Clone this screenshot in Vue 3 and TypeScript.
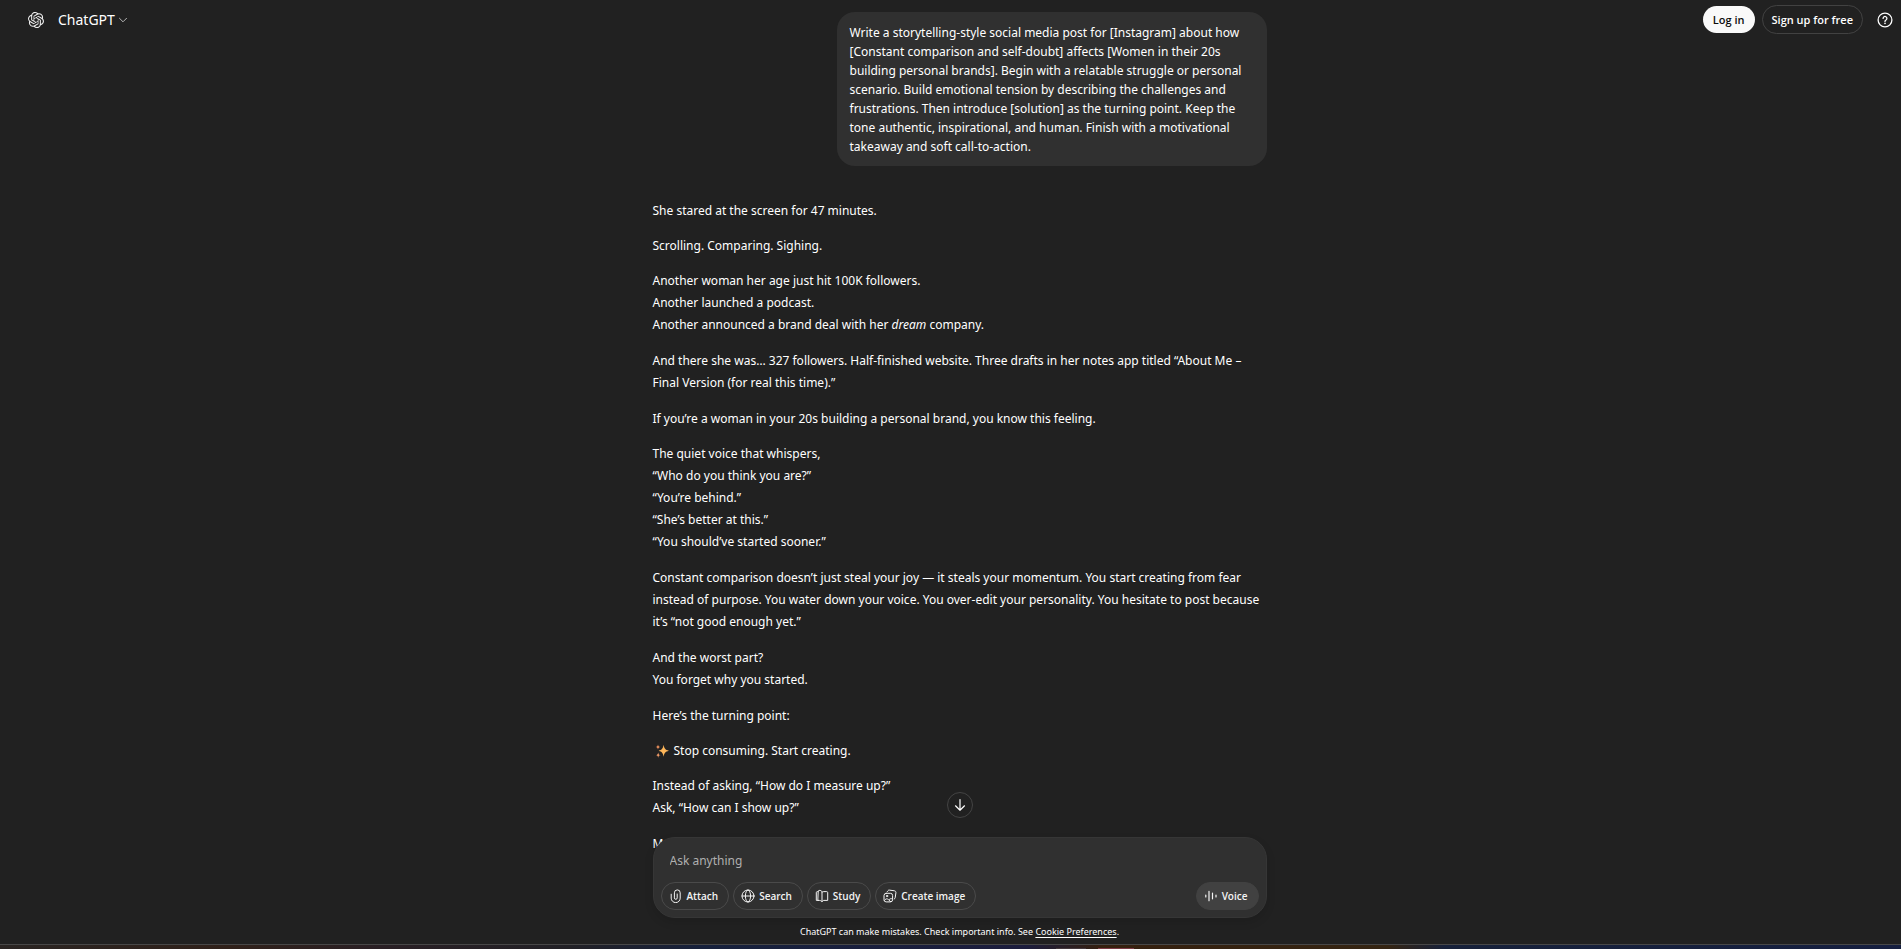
<script setup lang="ts">
import { ref } from 'vue'

interface Tool {
  label: string
  icon: 'attach' | 'search' | 'study' | 'image'
}

const draft = ref<string>('')

const prompt: string[] = [
  'Write a storytelling-style social media post for [Instagram] about how',
  '[Constant comparison and self-doubt] affects [Women in their 20s',
  'building personal brands]. Begin with a relatable struggle or personal',
  'scenario. Build emotional tension by describing the challenges and',
  'frustrations. Then introduce [solution] as the turning point. Keep the',
  'tone authentic, inspirational, and human. Finish with a motivational',
  'takeaway and soft call-to-action.',
]

const tools: Tool[] = [
  { label: 'Attach', icon: 'attach' },
  { label: 'Search', icon: 'search' },
  { label: 'Study', icon: 'study' },
  { label: 'Create image', icon: 'image' },
]
</script>

<template>
  <div class="app">
    <header class="topbar">
      <a class="home" href="#" aria-label="Home">
        <svg viewBox="0 0 24 24" width="16" height="16" fill="currentColor">
          <path d="M22.2819 9.8211a5.9847 5.9847 0 0 0-.5157-4.9108 6.0462 6.0462 0 0 0-6.5098-2.9A6.0651 6.0651 0 0 0 4.9807 4.1818a5.9847 5.9847 0 0 0-3.9977 2.9 6.0462 6.0462 0 0 0 .7427 7.0966 5.98 5.98 0 0 0 .511 4.9107 6.051 6.051 0 0 0 6.5146 2.9001A5.9847 5.9847 0 0 0 13.2599 24a6.0557 6.0557 0 0 0 5.7718-4.2058 5.9894 5.9894 0 0 0 3.9977-2.9001 6.0557 6.0557 0 0 0-.7475-7.0729zm-9.022 12.6081a4.4755 4.4755 0 0 1-2.8764-1.0408l.1419-.0804 4.7783-2.7582a.7948.7948 0 0 0 .3927-.6813v-6.7369l2.02 1.1686a.071.071 0 0 1 .038.052v5.5826a4.504 4.504 0 0 1-4.4945 4.4944zm-9.6607-4.1254a4.4708 4.4708 0 0 1-.5346-3.0137l.142.0852 4.783 2.7582a.7712.7712 0 0 0 .7806 0l5.8428-3.3685v2.3324a.0804.0804 0 0 1-.0332.0615L9.74 19.9502a4.4992 4.4992 0 0 1-6.1408-1.6464zM2.3408 7.8956a4.485 4.485 0 0 1 2.3655-1.9728V11.6a.7664.7664 0 0 0 .3879.6765l5.8144 3.3543-2.0201 1.1685a.0757.0757 0 0 1-.071 0l-4.8303-2.7865A4.504 4.504 0 0 1 2.3408 7.872zm16.5963 3.8558L13.1038 8.364 15.1192 7.2a.0757.0757 0 0 1 .071 0l4.8303 2.7913a4.4944 4.4944 0 0 1-.6765 8.1042v-5.6772a.79.79 0 0 0-.407-.667zm2.0107-3.0231l-.142-.0852-4.7735-2.7818a.7759.7759 0 0 0-.7854 0L9.409 9.2297V6.8974a.0662.0662 0 0 1 .0284-.0615l4.8303-2.7866a4.4992 4.4992 0 0 1 6.6802 4.66zM8.3065 12.863l-2.02-1.1638a.0804.0804 0 0 1-.038-.0567V6.0742a4.4992 4.4992 0 0 1 7.3757-3.4537l-.142.0805L8.704 5.459a.7948.7948 0 0 0-.3927.6813zm1.0976-2.3654l2.602-1.4998 2.6069 1.4998v2.9994l-2.5974 1.4997-2.6067-1.4997Z" />
        </svg>
      </a>
      <button class="model" type="button">
        ChatGPT
        <svg viewBox="0 0 10 10" width="10" height="10" fill="none" stroke="currentColor">
          <path d="M1.2 3 5 6.8 8.8 3" />
        </svg>
      </button>
      <nav class="account">
        <button class="login" type="button">Log in</button>
        <button class="signup" type="button">Sign up for free</button>
        <button class="help" type="button" aria-label="Help">
          <svg viewBox="0 0 16 16" width="16" height="16" fill="none" stroke="currentColor">
            <circle cx="8" cy="8" r="6.9" stroke-width="1.3" />
            <path d="M6.1 6.4a1.9 1.9 0 1 1 2.9 1.600c-.7.4-1 .7-1 1.400" stroke-width="1.3" stroke-linecap="round" />
            <circle cx="8" cy="11.3" r=".85" fill="currentColor" stroke="none" />
          </svg>
        </button>
      </nav>
    </header>

    <main class="thread">
      <div class="column">
        <div class="bubble">
          <template v-for="(line, i) in prompt" :key="i">{{ line }}<br v-if="i < prompt.length - 1" /></template>
        </div>

        <article class="reply">
          <p>She stared at the screen for 47 minutes.</p>
          <p>Scrolling. Comparing. Sighing.</p>
          <p class="stanza">
            Another woman her age just hit 100K followers.<br />
            Another launched a podcast.<br />
            Another announced a brand deal with her <em>dream</em> company.
          </p>
          <p class="stanza">
            And there she was… 327 followers. Half-finished website. Three drafts in her notes app titled “About Me –<br />
            Final Version (for real this time).”
          </p>
          <p>If you’re a woman in your 20s building a personal brand, you know this feeling.</p>
          <p class="stanza">
            The quiet voice that whispers,<br />
            “Who do you think you are?”<br />
            “You’re behind.”<br />
            “She’s better at this.”<br />
            “You should’ve started sooner.”
          </p>
          <p class="stanza">
            Constant comparison doesn’t just steal your joy — it steals your momentum. You start creating from fear<br />
            instead of purpose. You water down your voice. You over-edit your personality. You hesitate to post because<br />
            it’s “not good enough yet.”
          </p>
          <p class="stanza">
            And the worst part?<br />
            You forget why you started.
          </p>
          <p>Here’s the turning point:</p>
          <p class="spark-line">
            <svg class="spark" viewBox="0 0 14 14" width="14" height="14" role="img" aria-label="Sparkles">
              <path d="M8.600.800c.7 3.800 1.600 5 5.300 6-3.700 1-4.600 2.200-5.300 6-.7-3.800-1.600-5-5-6 3.400-1 4.300-2.200 5-6z" fill="#fdb65a" />
              <path d="M3 .600c.3 1.700.8 2.200 2.400 2.500-1.600.3-2.100.8-2.400 2.500-.3-1.700-.8-2.200-2.400-2.500C2.200 2.800 2.700 2.300 3 .600z" fill="#f2935e" />
              <path d="M3.200 8.400c.4 1.800.9 2.400 2.600 2.700-1.700.3-2.200.9-2.600 2.700-.4-1.800-.9-2.400-2.600-2.700 1.700-.3 2.200-.9 2.600-2.700z" fill="#f59d68" />
            </svg>
            Stop consuming. Start creating.
          </p>
          <p class="stanza">
            Instead of asking, “How do I measure up?”<br />
            Ask, “How can I show up?”
          </p>
          <p>M</p>
        </article>
      </div>
    </main>

    <section class="dock">
      <div class="column">
        <button class="to-bottom" type="button" aria-label="Scroll to bottom">
          <svg viewBox="0 0 16 16" width="16" height="16" fill="none" stroke="currentColor" stroke-width="1.2" stroke-linecap="round" stroke-linejoin="round">
            <path d="M8 2.500V13M3.500 8.800 8 13.200l4.500-4.400" />
          </svg>
        </button>

        <form class="composer" @submit.prevent>
          <input v-model="draft" class="entry" type="text" placeholder="Ask anything" aria-label="Ask anything" />
          <div class="tools">
            <button v-for="tool in tools" :key="tool.label" class="tool" type="button">
              <svg viewBox="0 0 14 14" width="14" height="14" fill="none" stroke="currentColor" stroke-linecap="round" stroke-linejoin="round">
                <g v-if="tool.icon === 'attach'">
                  <path d="M2.200 5.200v3.900a4.500 4.500 0 0 0 9 0V3.800a2.900 2.900 0 0 0-5.800 0v5.100a1.400 1.400 0 0 0 2.800 0V5" />
                </g>
                <g v-else-if="tool.icon === 'search'">
                  <circle cx="7" cy="7" r="6" />
                  <ellipse cx="7" cy="7" rx="2.600" ry="6" />
                  <path d="M1 7h12" />
                </g>
                <g v-else-if="tool.icon === 'study'">
                  <path d="M3.200 2.600H2.300c-.6 0-1 .4-1 1v7.800h2.200M3.200 2.400c0-.6.3-.9.900-1C5.700 1.300 6.600 1.700 7 2.800v9.900c-.6-1-1.800-1.400-3.800-1.300zM7 3.300c.5-.5 1-.7 1.800-.7h2.900c.6 0 1 .4 1 1v7.800H9c-.9 0-1.500.3-2 1.300" />
                </g>
                <g v-else>
                  <rect x="1" y="4.300" width="8.600" height="8.600" rx="2.200" />
                  <path d="M4.300 2.600 5 1.700c.3-.5.8-.7 1.400-.6l5 .7c1.100.2 1.700 1 1.500 2l-.7 4.900c-.1.6-.4 1-.9 1.300M1.400 11.300c1.300-1.700 2.600-1.900 3.900-.8l2.400 2.200M6.300 10.500c.9-1 1.900-1.200 3.100-.5" />
                  <circle cx="4" cy="7" r=".7" />
                </g>
              </svg>
              {{ tool.label }}
            </button>
            <button class="voice" type="button">
              <svg viewBox="0 0 14 14" width="14" height="14" fill="none" stroke="currentColor" stroke-width="1.2" stroke-linecap="round">
                <path d="M1.800 6v2M5 2.300v9.400M8.500 4.200v5.600M12 6v2" />
              </svg>
              Voice
            </button>
          </div>
        </form>

        <p class="notice">
          ChatGPT can make mistakes. Check important info. See <a href="#">Cookie Preferences</a>.
        </p>
      </div>
    </section>

    <div class="edge"><i class="tab"></i><i class="tab active"></i></div>
  </div>
</template>

<style>
body {
  margin: 0;
  background: #212121;
}
</style>

<style scoped>
.app {
  position: relative;
  display: flex;
  flex-direction: column;
  height: 100vh;
  overflow: hidden;
  background: #212121;
  color: #fff;
  font-family: "Noto Sans", "Open Sans", sans-serif;
  font-size: 12px;
}

button {
  margin: 0;
  padding: 0;
  border: 0;
  background: none;
  color: inherit;
  font: inherit;
  white-space: nowrap;
}

svg {
  display: block;
  flex: none;
}

.topbar {
  position: absolute;
  top: 0;
  left: 0;
  right: 0;
  display: flex;
  align-items: center;
  height: 39px;
  padding: 0 8px 0 28px;
}

.home {
  color: #f0f0f0;
}

.model {
  display: flex;
  align-items: center;
  gap: 3px;
  margin-left: 14px;
  font-size: 14px;
}

.model svg {
  color: #b4b4b4;
}

.account {
  display: flex;
  align-items: center;
  gap: 7px;
  margin-left: auto;
  font-family: "Open Sans", "Noto Sans", sans-serif;
  font-size: 11px;
  font-weight: 600;
}

.login {
  height: 27px;
  padding: 0 10px;
  border-radius: 14px;
  background: #f9f9f9;
  color: #0d0d0d;
}

.signup {
  height: 29px;
  padding: 0 9px;
  border: 1px solid #424242;
  border-radius: 15px;
}

.help {
  margin-left: 7px;
}

.thread {
  flex: 1;
  min-height: 0;
  overflow: hidden;
  padding: 12px 0 0 18px;
}

.column {
  position: relative;
  width: 100%;
  max-width: 614px;
  margin: 0 auto;
}

.bubble {
  box-sizing: border-box;
  width: fit-content;
  max-width: 70%;
  min-width: 430px;
  margin-left: auto;
  padding: 11px 13px 10px;
  border-radius: 18px;
  background: #303030;
  line-height: 19px;
  white-space: nowrap;
}

.reply {
  margin-top: 34px;
  line-height: 22px;
  white-space: nowrap;
}

.reply p {
  margin: 0 0 13px;
}

.reply .stanza {
  margin-bottom: 14px;
}

.spark-line {
  display: flex;
  align-items: center;
  gap: 5px;
}

.spark {
  margin-left: 2px;
}

.dock {
  position: relative;
  margin-top: -50px;
  padding-left: 18px;
}

.composer {
  position: relative;
  box-sizing: border-box;
  height: 81px;
  padding: 12px 7px 7px;
  border: 1px solid #363636;
  border-radius: 22px;
  background: #303030;
  box-shadow: 0 4px 10px rgba(0, 0, 0, 0.12);
}

.entry {
  display: block;
  box-sizing: border-box;
  width: 100%;
  height: 20px;
  margin-bottom: 12px;
  padding: 0 9px;
  border: 0;
  outline: 0;
  background: none;
  color: #fff;
  font: inherit;
}

.entry::placeholder {
  color: #afafaf;
  opacity: 1;
}

.tools {
  display: flex;
  gap: 4px;
  font-family: "Open Sans", "Noto Sans", sans-serif;
  font-size: 10px;
  font-weight: 600;
}

.tool,
.voice {
  display: flex;
  align-items: center;
  gap: 4px;
  box-sizing: border-box;
  height: 28px;
  padding: 0 10px 0 7px;
  border: 1px solid #4a4a4a;
  border-radius: 14px;
  color: #f3f3f3;
}

.voice {
  margin-left: auto;
  border-color: #414141;
  background: #414141;
}

.to-bottom {
  position: absolute;
  top: -45px;
  left: calc(50% - 13px);
  display: grid;
  place-items: center;
  width: 26px;
  height: 26px;
  border: 1px solid #444;
  border-radius: 50%;
  background: #212121;
}

.notice {
  margin: 0;
  height: 26px;
  background: #212121;
  font-size: 9px;
  line-height: 28px;
  text-align: center;
}

.notice a {
  color: inherit;
  text-underline-offset: 2px;
}

.edge {
  display: flex;
  align-items: flex-end;
  gap: 12px;
  height: 4px;
  padding-left: 1056px;
  border-top: 1px solid #484848;
  background: linear-gradient(90deg, #2a2523 0, #30211a 12%, #2a2025 20%, #222126 30%, #17213c 37%, #1c1d3d 54%, #35200f 58%, #352513 73%, #17213a 76%, #161f40 100%);
}

.tab {
  width: 30px;
  height: 1px;
  background: #43383c;
}

.tab.active {
  width: 36px;
  background: #7a3a44;
}
</style>
